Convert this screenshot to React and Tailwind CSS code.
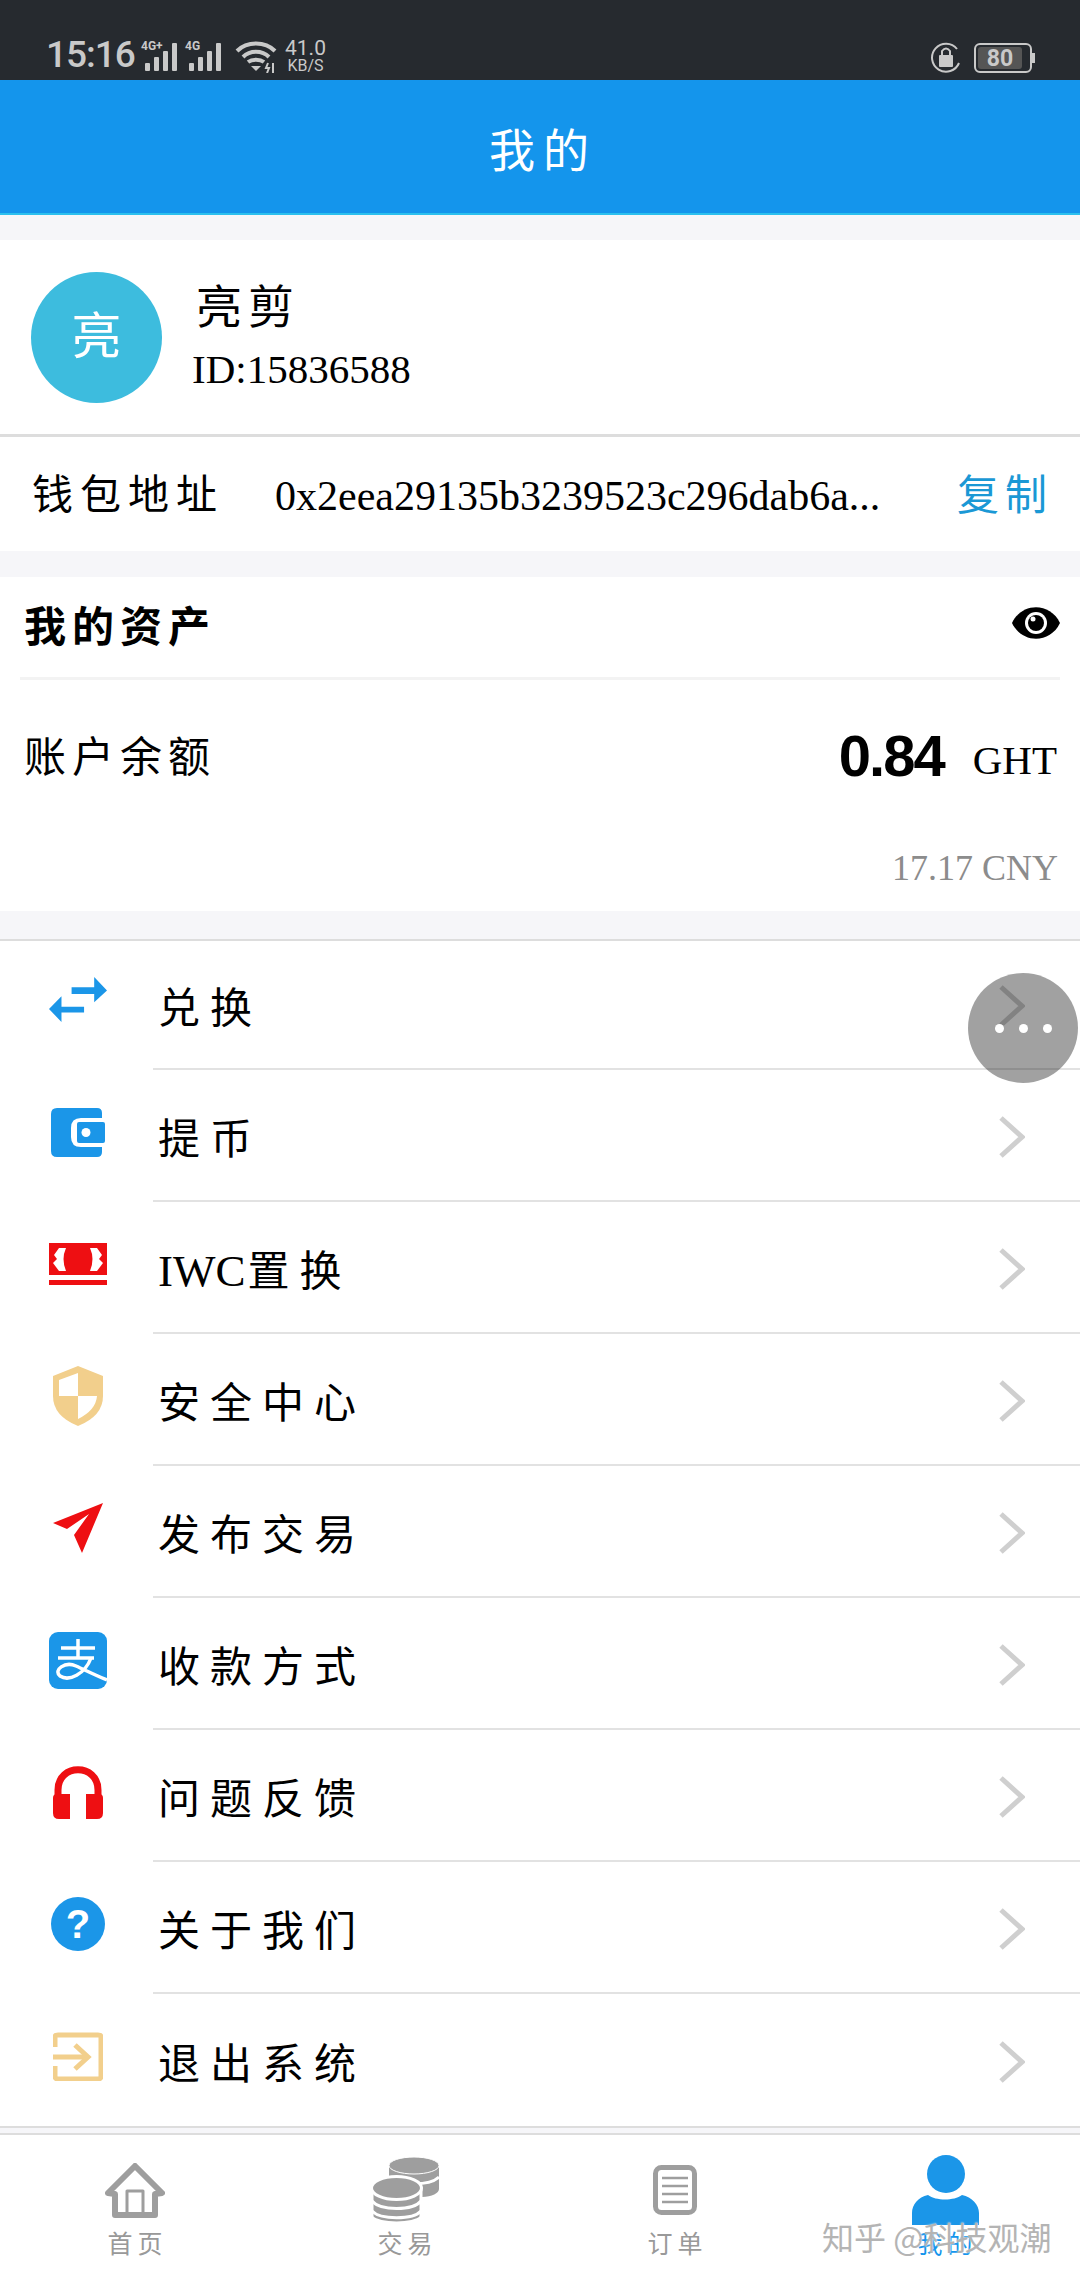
import React from 'react';

const BLUE = '#1b96e8';
const RED = '#ee0f12';
const SAND = '#f2cf8c';

const Chevron = () => (
    <svg width="27" height="44" viewBox="0 0 27 44" fill="none" className="mt-[3px]">
        <path d="M3 3 L24 22 L3 41" stroke="#cfcfcf" strokeWidth="5" />
    </svg>
);

const SwapIcon = () => (
    <svg width="58" height="45" viewBox="148 55 172 133" fill={BLUE} className="-mt-[4px]">
        <path d="M215 85 H282 V55 L320 95 L282 130 V105 H215 Z" />
        <path d="M252 143 H185 V112 L148 150 L185 188 V160 H252 Z" />
    </svg>
);

const WalletIcon = () => (
    <svg width="54" height="49" viewBox="0 0 54 49">
        <path d="M6 0 H46 Q51 0 51 5 V10 H30 Q20 10 20 20 V29 Q20 39 30 39 H51 V44 Q51 49 46 49 H6 Q0 49 0 43 V6 Q0 0 6 0 Z" fill={BLUE} />
        <rect x="26" y="14" width="28" height="21" rx="2" fill={BLUE} />
        <circle cx="35" cy="24.5" r="4.5" fill="#fff" />
    </svg>
);

const CashIcon = () => (
    <svg width="58" height="42" viewBox="0 0 58 42">
        <rect x="0" y="0" width="58" height="32" fill={RED} />
        <rect x="0" y="37" width="58" height="5" fill={RED} />
        <path d="M17 5 L10 5 L5 12 L8 16 L4 20 L10 28 L17 28 Q12 16 17 5 Z" fill="#fff" />
        <path d="M41 5 L48 5 L53 12 L50 16 L54 20 L48 28 L41 28 Q46 16 41 5 Z" fill="#fff" />
    </svg>
);

const ShieldIcon = () => (
    <svg width="50" height="60" viewBox="0 0 50 60">
        <path d="M25 0 L50 10 V30 Q50 50 25 60 Q0 50 0 30 V10 Z" fill={SAND} />
        <path d="M25 7 V30 H6 V14 Z" fill="#fff" />
        <path d="M25 30 H44 Q43 44 25 53 Z" fill="#fff" />
    </svg>
);

const PlaneIcon = () => (
    <svg width="50" height="50" viewBox="0 0 50 50">
        <path d="M50 0 L0 20 L14 26 L36 11 L21 32 L29 50 Z" fill={RED} />
    </svg>
);

const AlipayIcon = () => (
    <svg width="58" height="57" viewBox="0 0 58 57">
        <rect width="58" height="57" rx="9" fill={BLUE} />
        <g fill="none" stroke="#fff" strokeWidth="3.5">
            <path d="M12 16 H46" />
            <path d="M29 7 V25" />
            <path d="M9 26 H45" />
            <path d="M42 26 C36 42 20 50 11 44 C4 38 16 29 27 34 C36 38 46 43 58 48" />
        </g>
    </svg>
);

const HeadphoneIcon = () => (
    <svg width="50" height="54" viewBox="0 0 50 54">
        <path d="M5 33 V25 C5 -2 45 -2 45 25 V33" fill="none" stroke={RED} strokeWidth="7" />
        <path d="M4 29 H17 V54 H6 Q0 54 0 48 V33 Q0 29 4 29 Z" fill={RED} />
        <path d="M46 29 H33 V54 H44 Q50 54 50 48 V33 Q50 29 46 29 Z" fill={RED} />
    </svg>
);

const QuestionIcon = () => (
    <div className="w-[54px] h-[54px] rounded-full bg-[#1b96e8] flex items-center justify-center text-white text-[40px] leading-none font-bold font-['Liberation_Sans',sans-serif]">
        ?
    </div>
);

const ExitIcon = () => (
    <svg width="50" height="49" viewBox="0 0 50 49" fill="none" stroke={SAND} strokeWidth="5">
        <path d="M2 15 V5 Q2 3 5 3 H45 Q48 3 48 5 V44 Q48 47 45 47 H5 Q2 47 2 44 V34" />
        <path d="M0 25 H34" />
        <path d="M22 13 L35 25 L22 37" />
    </svg>
);

const HomeIcon = () => (
    <svg width="60" height="55" viewBox="0 0 60 55" fill="none" stroke="#9e9e9e" strokeWidth="6" strokeLinejoin="round">
        <path d="M30 3 L57 30 L50 31 V52 H10 V31 L3 30 Z" />
        <path d="M22 52 V28 H38 V52" strokeWidth="3" />
    </svg>
);

const CoinsIcon = () => (
    <svg width="67" height="66" viewBox="0 0 67 66" fill="#9e9e9e">
        {/* back stack */}
        <path d="M17 9 V34 H50 V40 C60 40 67 36 67 32 V9 Z" />
        <path d="M17 20 C26 29 58 29 67 20" stroke="#fff" strokeWidth="3" fill="none" />
        <ellipse cx="42" cy="8.5" rx="25" ry="8.5" stroke="#fff" strokeWidth="1" />
        {/* front stack */}
        <path d="M0 31 V60 C6 68 43 68 49 60 V31 Z" stroke="#fff" strokeWidth="3" />
        <path d="M0 44 C8 54 41 54 49 44 M0 54 C8 63 41 63 49 54" stroke="#fff" strokeWidth="3" fill="none" />
        <ellipse cx="24.5" cy="31" rx="25" ry="11.5" stroke="#fff" strokeWidth="3" />
    </svg>
);

const OrderIcon = () => (
    <svg width="44" height="50" viewBox="0 0 44 50" fill="none" stroke="#9e9e9e">
        <rect x="2.5" y="2.5" width="39" height="45" rx="6" strokeWidth="5" />
        <path d="M9 13 H35 M9 21 H35 M9 29 H35 M9 37 H35" strokeWidth="2.5" />
    </svg>
);

const UserIcon = () => (
    <svg width="67" height="70" viewBox="0 0 67 70" fill={BLUE}>
        <ellipse cx="34" cy="19" rx="19" ry="19" />
        <path d="M0 70 V58 C0 50 6 42 16 40 C24 46 42 46 50 40 C60 42 67 50 67 58 V70 Z" />
    </svg>
);

const Bars = () => (
    <svg width="38" height="28" viewBox="0 0 38 28" fill="#c9c9c9">
        <rect x="4" y="20" width="5" height="8" rx="1" />
        <rect x="13" y="14" width="5" height="14" rx="1" />
        <rect x="22" y="8" width="5" height="20" rx="1" />
        <rect x="31" y="0" width="5" height="28" rx="1" />
    </svg>
);

const Wifi = () => (
    <svg width="42" height="32" viewBox="0 0 42 32" fill="none" stroke="#c9c9c9" strokeWidth="4">
        <path d="M2 10 C12 0 30 0 40 10" />
        <path d="M8 16 C15 9 27 9 34 16" />
        <path d="M13 21 C17 18 25 18 29 21" />
        <path d="M21 30 L16 25 H26 Z" fill="#c9c9c9" stroke="none" />
        <path d="M33 22 L31 27 H34 L32 32 M38 22 V32" strokeWidth="2" />
    </svg>
);

const RotationLock = () => (
    <svg width="32" height="32" viewBox="0 0 32 32" fill="none">
        <path d="M27 8 A14 14 0 1 0 29 22" stroke="#c9c9c9" strokeWidth="2" />
        <rect x="9" y="14" width="14" height="12" rx="1" fill="#c9c9c9" />
        <path d="M12 14 V10 Q16 5 20 10 V14" stroke="#c9c9c9" strokeWidth="2" />
    </svg>
);

const menuItems = [
    { label: '兑换', Icon: SwapIcon },
    { label: '提币', Icon: WalletIcon },
    { latin: 'IWC', label: '置换', Icon: CashIcon },
    { label: '安全中心', Icon: ShieldIcon },
    { label: '发布交易', Icon: PlaneIcon },
    { label: '收款方式', Icon: AlipayIcon },
    { label: '问题反馈', Icon: HeadphoneIcon },
    { label: '关于我们', Icon: QuestionIcon },
    { label: '退出系统', Icon: ExitIcon },
];

const tabs = [
    { label: '首页', Icon: HomeIcon },
    { label: '交易', Icon: CoinsIcon },
    { label: '订单', Icon: OrderIcon },
    { label: '我的', Icon: UserIcon, active: true },
];

const App = () => {
    return (
        <div className="relative w-[1080px] h-[2280px] overflow-hidden bg-[#f6f6f9] text-black font-['Liberation_Serif','Noto_Sans_CJK_SC',serif]">
            {/* Status bar */}
            <div className="h-[80px] bg-[#262a2f] flex items-end justify-between pl-[46px] pr-[48px] pb-[7px] text-[#c9c9c9] font-['Roboto',sans-serif]">
                <div className="flex items-end">
                    <span className="text-[37px] leading-[36px] w-[92px] tracking-[-1px] font-medium">15:16</span>
                    <div className="relative w-[44px] h-[30px] ml-[3px]">
                        <Bars />
                        <span className="absolute -top-[3px] left-0 text-[12px] leading-none font-bold bg-[#262a2f]">4G+</span>
                    </div>
                    <div className="relative w-[44px] h-[30px]">
                        <Bars />
                        <span className="absolute -top-[3px] left-0 text-[12px] leading-none font-bold bg-[#262a2f]">4G</span>
                    </div>
                    <div className="ml-[6px]">
                        <Wifi />
                    </div>
                    <div className="ml-[8px] flex flex-col items-center leading-none">
                        <span className="text-[21px] leading-[19px]">41.0</span>
                        <span className="text-[16px] leading-[15px]">KB/S</span>
                    </div>
                </div>
                <div className="flex items-end gap-[12px]">
                    <RotationLock />
                    <div className="relative w-[58px] h-[30px] rounded-[6px] border-2 border-[#c9c9c9] p-[2px]">
                        <div className="w-[44px] h-full rounded-[3px] bg-[#555] flex items-center justify-center text-[23px] font-bold leading-none">80</div>
                        <div className="absolute -right-[5px] top-[8px] w-[3px] h-[10px] bg-[#c9c9c9]" />
                    </div>
                </div>
            </div>

            {/* Title bar */}
            <div className="h-[135px] bg-[#1495ec] border-b-2 border-[#2cc0ee] flex items-center justify-center text-white text-[46px] tracking-[8px] pt-[10px] pl-[6px]">
                我的
            </div>

            {/* Profile */}
            <div className="mt-[25px] h-[197px] bg-white border-b-[3px] border-[#dddddd] flex items-center pl-[31px]">
                <div className="w-[131px] h-[131px] rounded-full bg-[#3dbcde] flex items-center justify-center text-white text-[50px]">亮</div>
                <div className="ml-[33px]">
                    <div className="text-[46px] leading-[56px] tracking-[6px] ml-[1px]">亮剪</div>
                    <div className="text-[41px] leading-[50px] mt-[8px] -ml-[3px]">ID:15836588</div>
                </div>
            </div>

            {/* Wallet address */}
            <div className="h-[114px] bg-white flex items-center pl-[32px] pr-[33px] pt-[4px]">
                <span className="text-[41px] tracking-[7px] w-[243px]">钱包地址</span>
                <span className="text-[42px] flex-1">0x2eea29135b3239523c296dab6a...</span>
                <span className="text-[42px] tracking-[6px] text-[#1a98d5] -mr-[6px]">复制</span>
            </div>

            {/* Assets */}
            <div className="mt-[26px] h-[334px] bg-white flex flex-col">
                <div className="mx-[20px] h-[103px] border-b-[3px] border-[#f3f3f3] flex items-center justify-between pl-[4px]">
                    <span className="text-[42px] font-bold tracking-[6px] pt-[2px]">我的资产</span>
                    <svg width="48" height="32" viewBox="0 0 48 32" className="mb-[8px]">
                        <path d="M0 16 C10 -5 38 -5 48 16 C38 37 10 37 0 16 Z" fill="#000" />
                        <circle cx="24" cy="16" r="11" fill="#fff" />
                        <circle cx="24" cy="16" r="8" fill="#000" />
                        <circle cx="21" cy="12" r="2.5" fill="#fff" />
                    </svg>
                </div>
                <div className="mt-[50px] flex items-center justify-between pl-[24px] pr-[23px] h-[50px]">
                    <span className="text-[42px] tracking-[6px] pt-[6px]">账户余额</span>
                    <div className="flex items-baseline">
                        <span className="text-[58px] font-bold tracking-[-2px] font-['Liberation_Sans',sans-serif]">0.84</span>
                        <span className="text-[41px] ml-[29px] -translate-y-[2px]">GHT</span>
                    </div>
                </div>
                <div className="mt-[66px] pr-[22px] text-right text-[36px] leading-[44px] text-[#8c8c8c]">17.17 CNY</div>
            </div>

            {/* Menu */}
            <div className="mt-[28px] bg-white border-y-2 border-[#dddddd]">
                {menuItems.map(({ label, latin, Icon }, index) => (
                    <div key={label} className={`flex items-center ${index === 0 ? 'h-[129px]' : 'h-[132px]'}`}>
                        <div className="w-[153px] flex justify-center pl-[3px] pb-[8px]">
                            <Icon />
                        </div>
                        <div className={`flex-1 h-full flex items-center justify-between pl-[5px] pr-[55px] ${index === menuItems.length - 1 ? '' : 'border-b-2 border-[#e2e2e2]'}`}>
                            <span className="text-[42px] tracking-[10px] pt-[10px]">
                                {latin && <span className="tracking-normal text-[45px] mr-[2px]">{latin}</span>}
                                {label}
                            </span>
                            <Chevron />
                        </div>
                    </div>
                ))}
            </div>

            {/* Tab bar */}
            <div className="mt-[5px] h-[147px] bg-white border-t-2 border-[#dddddd] grid grid-cols-4">
                {tabs.map(({ label, Icon, active }) => (
                    <div key={label} className="flex flex-col items-center pt-[21px]">
                        <div className="h-[68px] flex items-center justify-center">
                            <Icon />
                        </div>
                        <span className={`mt-[6px] text-[25px] leading-[30px] tracking-[5px] -mr-[5px] ${active ? 'text-[#1495ec]' : 'text-[#999999]'}`}>
                            {label}
                        </span>
                    </div>
                ))}
            </div>

            {/* Floating assistant button */}
            <div className="absolute left-[968px] top-[973px] w-[110px] h-[110px] rounded-full bg-black/37 flex items-center justify-center gap-[15px]">
                <div className="w-[9px] h-[9px] rounded-full bg-white" />
                <div className="w-[9px] h-[9px] rounded-full bg-white" />
                <div className="w-[9px] h-[9px] rounded-full bg-white" />
            </div>

            {/* Watermark */}
            <div className="absolute left-[822px] top-[2216px] text-[32px] leading-[40px] whitespace-nowrap text-[#b4b4b4] font-['Noto_Sans_CJK_SC',sans-serif] [text-shadow:0_0_2px_#ffffff]">
                知乎 @科技观潮
            </div>
        </div>
    );
};

export default App;
